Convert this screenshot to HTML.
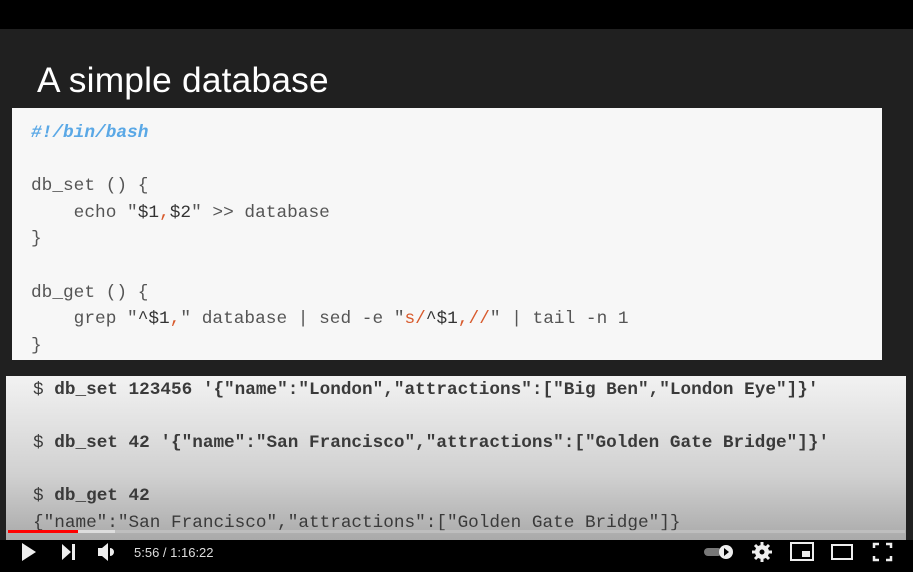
<!DOCTYPE html>
<html><head><style>
*{margin:0;padding:0}
body{width:913px;height:572px;background:#000;position:relative;overflow:hidden;font-family:"Liberation Sans",sans-serif}
.slide{position:absolute;left:0;top:29px;width:913px;height:543px;background:#202020}
.title{position:absolute;left:37px;top:61px;color:#fff;font-size:35.3px;letter-spacing:0.2px}
.code{position:absolute;left:12px;top:108px;width:870px;height:252px;background:#f7f7f7}
.code pre,.term pre{font-family:"Liberation Mono",monospace;position:absolute;left:0;white-space:pre}
.code pre{font-size:17.8px;color:#555;line-height:26.6px;left:19px;top:12px}
.c{color:#5aa8e6;font-style:italic;font-weight:bold}
.o{color:#d85a2c}
.term{position:absolute;left:6px;top:376px;width:900px;height:167px;background:linear-gradient(#f2f2f2,#d0d0d0 60%,#a8a8a8)}
.term pre{font-size:17.7px;color:#3a3a3a;line-height:26.6px;left:27px;top:1px}
.term b{font-weight:bold}
.ctrl{position:absolute;left:0;top:540px;width:913px;height:32px;background:#000}
.time{position:absolute;left:134px;top:545px;color:#ddd;font-size:13px}
</style></head><body>
<div class="slide"></div>
<div class="title">A simple database</div>
<div class="code"><pre><span class="c">#!/bin/bash</span>

db_set () {
    echo "<span style="color:#333">$1</span><span class="o">,</span><span style="color:#333">$2</span>" &gt;&gt; database
}

db_get () {
    grep "<span style="color:#333">^$1</span><span class="o">,</span>" database | sed -e "<span class="o">s/</span><span style="color:#333">^$1</span><span class="o">,//</span>" | tail -n 1
}</pre></div>
<div class="term"><pre>$ <b>db_set 123456 '{"name":"London","attractions":["Big Ben","London Eye"]}'</b>

$ <b>db_set 42 '{"name":"San Francisco","attractions":["Golden Gate Bridge"]}'</b>

$ <b>db_get 42</b>
{"name":"San Francisco","attractions":["Golden Gate Bridge"]}</pre></div>
<div style="position:absolute;left:8px;top:530px;width:897px;height:3px;background:rgba(200,200,200,0.6)"></div>
<div style="position:absolute;left:8px;top:530px;width:107px;height:3px;background:#ddd"></div>
<div style="position:absolute;left:8px;top:530px;width:70px;height:3px;background:#f00"></div>
<div class="ctrl"></div>
<svg style="position:absolute;left:0;top:540px" width="913" height="32">
<path d="M22 3 L36 12 L22 21Z" fill="#eee"/>
<path d="M62 4 L71 12 L62 20Z M72 4h3v16h-3z" fill="#eee"/>
<path d="M98 8h4l6-5v18l-6-5h-4z M110 8a4 4 0 0 1 0 8z" fill="#eee"/>
<rect x="704" y="8" width="18" height="8" rx="4" fill="#777"/>
<circle cx="726" cy="12" r="7" fill="#eee"/><path d="M724 8l5 4-5 4z" fill="#000"/>
<circle cx="762" cy="12" r="7" fill="#eee"/><circle cx="762" cy="12" r="2.5" fill="#000"/>
<path d="M762 2v4M762 18v4M752 12h4M768 12h4M755 5l3 3M766 16l3 3M755 19l3-3M766 8l3-3" stroke="#eee" stroke-width="3"/>
<rect x="791" y="3" width="22" height="17" fill="none" stroke="#eee" stroke-width="2"/>
<rect x="802" y="11" width="8" height="6" fill="#eee"/>
<rect x="832" y="5" width="20" height="14" fill="none" stroke="#eee" stroke-width="2"/>
<path d="M874 8V4h5M886 4h5v4M891 16v4h-5M879 20h-5v-4" fill="none" stroke="#eee" stroke-width="2.5"/>
</svg>
<div class="time">5:56 / 1:16:22</div>
</body></html>
